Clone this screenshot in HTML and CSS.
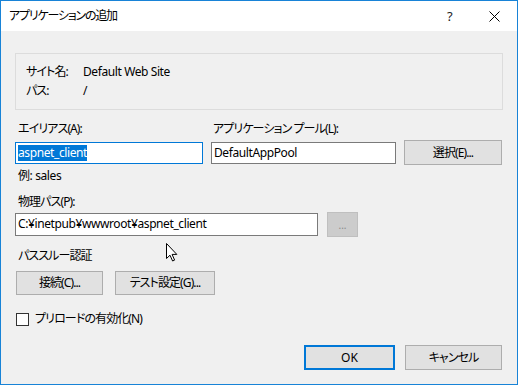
FILE: index.html
```html
<!DOCTYPE html>
<html lang="ja">
<head>
<meta charset="utf-8">
<title>アプリケーションの追加</title>
<link rel="stylesheet" href="styles.css">
</head>
<body>
<div class="window">
  <div class="titlebar">
    <span class="title">アプリケーションの追加</span>
    <span class="help">?</span>
    <svg class="close" width="11" height="11" viewBox="0 0 11 11"><path d="M0.5 0.5 L10.5 10.5 M10.5 0.5 L0.5 10.5" stroke="#000" stroke-width="1" fill="none"/></svg>
  </div>
  <div class="body">
    <div class="group">
      <div class="info-row"><span class="info-label jp">サイト名:</span><span>Default Web Site</span></div>
      <div class="info-row"><span class="info-label jp">パス:</span><span>/</span></div>
    </div>

    <div class="grid-alias">
      <label class="label jp">エイリアス(A):</label>
      <label class="label pool-label jp">アプリケーション プール(L):</label>
      <div class="input focused"><span class="selected">aspnet_client</span></div>
      <div class="input">DefaultAppPool</div>
      <button class="btn btn-select jp">選択(E)...</button>
    </div>
    <div class="example">例: sales</div>

    <div class="label path-label jp">物理パス(P):</div>
    <div class="path-row">
      <div class="input path-input">C:¥inetpub¥wwwroot¥aspnet_client</div>
      <button class="btn btn-browse" disabled>...</button>
    </div>

    <div class="label pass-label jp">パススルー認証</div>
    <div class="pass-row">
      <button class="btn btn-connect jp">接続(C)...</button>
      <button class="btn btn-test jp">テスト設定(G)...</button>
    </div>

    <div class="check-row">
      <span class="checkbox"></span>
      <span class="check-label jp">プリロードの有効化(N)</span>
    </div>

    <div class="footer">
      <button class="btn btn-ok">OK</button>
      <button class="btn btn-cancel jp">キャンセル</button>
    </div>
  </div>
  <svg class="cursor" width="12" height="19" viewBox="0 0 12 19"><path d="M0.5 0.5 L0.5 15.5 L4 12.2 L6.6 18 L8.6 17.1 L6.1 11.4 L10.8 11.4 Z" fill="#fff" stroke="#000" stroke-width="1" stroke-linejoin="miter"/></svg>
</div>
</body>
</html>
```

FILE: styles.css
```css
* { box-sizing: border-box; }
html, body { margin: 0; padding: 0; }
body {
  font-family: "Noto Sans", "Noto Sans CJK JP", sans-serif;
  font-size: 12px;
  color: #000;
  font-feature-settings: "palt";
  letter-spacing: -0.4px;
  background: #f0f0f0;
}
.jp { letter-spacing: -0.9px; }
.window {
  position: relative;
  width: 518px;
  height: 385px;
  border: 1px solid #1883d7;
  background: #f0f0f0;
  display: flex;
  flex-direction: column;
}
.titlebar {
  height: 30px;
  background: #fff;
  display: flex;
  align-items: center;
  padding-left: 8px;
  flex: none;
}
.title { flex: 1; line-height: 16px; letter-spacing: -1.2px; }
.help {
  width: 8px;
  margin-right: 34px;
  font-size: 13px;
  line-height: 16px;
  color: #222;
}
.close { margin-right: 17px; }
.body {
  padding: 0 15px 0 14px;
  display: flex;
  flex-direction: column;
  flex: 1;
}
.group {
  margin-top: 22px;
  width: 488px;
  height: 57px;
  border: 1px solid #dcdcdc;
  padding: 8px 10px 0 10px;
}
.info-row { display: flex; line-height: 19px; height: 19px; }
.info-label { width: 57px; flex: none; }
.label { display: block; line-height: 16px; height: 16px; }
.grid-alias {
  margin-top: 11px;
  display: grid;
  grid-template-columns: 188px 185px 98px;
  column-gap: 8px;
  row-gap: 3px;
  align-items: center;
}
.grid-alias .label { margin-left: 3px; }
.grid-alias .pool-label { grid-column: 2 / 4; margin-left: 2px; }
.input {
  height: 22px;
  background: #fff;
  border: 1px solid #7a7a7a;
  line-height: 20px;
  padding-left: 2px;
  white-space: nowrap;
  overflow: hidden;
}
.input.focused { border-color: #0078d7; }
.selected {
  background: #0078d7;
  color: #fff;
  display: inline-block;
  line-height: 16px;
}
.btn {
  font-family: inherit;
  font-size: 12px;
  font-feature-settings: "palt";
  color: #000;
  background: #e1e1e1;
  border: 1px solid #adadad;
  padding: 0;
  margin: 0;
  line-height: 20px;
  height: 24px;
  text-align: center;
}
.btn-select { height: 25px; }
.example { margin-top: 3px; line-height: 16px; margin-left: 3px; }
.path-label { margin-top: 10px; margin-left: 3px; }
.path-row {
  margin-top: 2px;
  display: flex;
  align-items: center;
  gap: 9px;
}
.path-input { width: 303px; height: 23px; }
.btn-browse {
  width: 31px;
  height: 25px;
  background: #cccccc;
  border-color: #bfbfbf;
  color: #8a8a8a;
  font-size: 10px;
}
.pass-label { margin-top: 11px; margin-left: 3px; }
.pass-row {
  margin-top: 7px;
  display: flex;
  gap: 12px;
  padding-left: 1px;
}
.btn-connect { width: 87px; }
.btn-test { width: 100px; }
.check-row {
  margin-top: 16px;
  display: flex;
  align-items: center;
  padding-left: 1px;
}
.checkbox {
  width: 13px;
  height: 13px;
  border: 1px solid #333;
  background: #fff;
  flex: none;
}
.check-label { margin-left: 6px; line-height: 16px; }
.footer {
  margin-top: 18px;
  display: flex;
  justify-content: flex-end;
  gap: 10px;
}
.btn-ok {
  width: 91px;
  height: 25px;
  border: 2px solid #0078d7;
}
.btn-cancel { width: 97px; height: 25px; }
.cursor {
  position: absolute;
  left: 165px;
  top: 242px;
}
```
